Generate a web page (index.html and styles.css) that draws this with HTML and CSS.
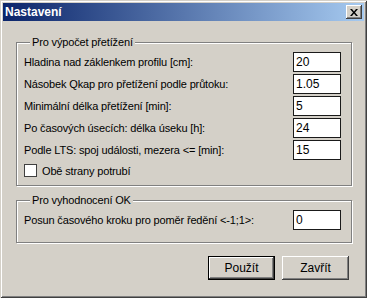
FILE: index.html
```html
<!DOCTYPE html>
<html lang="cs">
<head>
    <meta charset="UTF-8">
    <title>Nastavení</title>
    <link rel="stylesheet" href="styles.css">
</head>
<body>
    <div class="window">
        <!-- Titulek okna -->
        <div class="titlebar">
            <span class="title">Nastavení</span>
            <button class="close-btn" title="Zavřít">
                <svg width="8" height="7" viewBox="0 0 8 7">
                    <path d="M0 0h2l2 2.5L6 0h2L5 3.5 8 7H6L4 4.5 2 7H0l3-3.5z" fill="#000"/>
                </svg>
            </button>
        </div>

        <div class="content">
            <fieldset class="group">
                <legend>Pro výpočet přetížení</legend>
                <div class="row">
                    <label>Hladina nad záklenkem profilu [cm]:</label>
                    <input type="text" value="20">
                </div>
                <div class="row">
                    <label>Násobek Qkap pro přetížení podle průtoku:</label>
                    <input type="text" value="1.05">
                </div>
                <div class="row">
                    <label>Minimální délka přetížení [min]:</label>
                    <input type="text" value="5">
                </div>
                <div class="row">
                    <label>Po časových úsecích: délka úseku [h]:</label>
                    <input type="text" value="24">
                </div>
                <div class="row">
                    <label>Podle LTS: spoj události, mezera &lt;= [min]:</label>
                    <input type="text" value="15">
                </div>
                <div class="check-row">
                    <span class="checkbox"></span>
                    <span>Obě strany potrubí</span>
                </div>
            </fieldset>

            <fieldset class="group group-ok">
                <legend>Pro vyhodnocení OK</legend>
                <div class="row">
                    <label>Posun časového kroku pro poměr ředění &lt;-1;1&gt;:</label>
                    <input type="text" value="0">
                </div>
            </fieldset>

            <div class="buttons">
                <button class="btn btn-default">Použít</button>
                <button class="btn">Zavřít</button>
            </div>
        </div>
    </div>
</body>
</html>
```

FILE: styles.css
```css
/* Klasický vzhled dialogu */
body {
    margin: 0;
    background: #d4d0c8;
    font-family: "Liberation Sans", Arial, sans-serif;
    font-size: 11px;
    letter-spacing: -0.15px;
    color: #000;
}

.window {
    width: 367px;
    height: 298px;
    box-sizing: border-box;
    padding: 3px;
    background: #d4d0c8;
    box-shadow: inset 1px 1px 0 #d4d0c8, inset -1px -1px 0 #404040,
                inset 2px 2px 0 #fff, inset -2px -2px 0 #808080;
}

/* Titulek */
.titlebar {
    height: 18px;
    display: flex;
    align-items: center;
    justify-content: space-between;
    padding: 0 2px 0 2px;
    background: linear-gradient(to right, #0a246a, #a6caf0);
}

.title {
    color: #fff;
    font-weight: bold;
    font-size: 12px;
    letter-spacing: 0;
}

.close-btn {
    width: 16px;
    height: 14px;
    padding: 0;
    border: none;
    background: #d4d0c8;
    display: flex;
    align-items: center;
    justify-content: center;
    box-shadow: inset -1px -1px 0 #404040, inset 1px 1px 0 #fff,
                inset -2px -2px 0 #808080;
}

.content {
    padding: 15px 12px 0 13px;
}

/* Skupiny */
.group {
    margin: 0;
    padding: 4px 10px 8px 7px;
    border: 1px solid #808080;
    box-shadow: inset 1px 1px 0 #fff, 1px 1px 0 #fff;
}

.group legend {
    padding: 0 2px;
    margin-left: 6px;
    background: #d4d0c8;
}

.group-ok {
    margin-top: 8px;
    padding-top: 4px;
    padding-bottom: 12px;
}

.row {
    display: flex;
    justify-content: space-between;
    align-items: center;
    height: 20px;
    margin-bottom: 2px;
}

.group-ok .row {
    margin-bottom: 0;
}

.row input {
    width: 48px;
    height: 20px;
    box-sizing: border-box;
    border: 1px solid #1a1a1a;
    padding: 0 2px;
    font-family: inherit;
    font-size: 12px;
    outline: none;
}

.check-row {
    display: flex;
    align-items: center;
    gap: 5px;
    margin-top: 4px;
    height: 13px;
}

.checkbox {
    width: 11px;
    height: 11px;
    background: #fff;
    border: 1px solid #404040;
}

/* Tlačítka */
.buttons {
    display: flex;
    justify-content: flex-end;
    gap: 7px;
    margin-top: 13px;
    padding-right: 3px;
}

.btn {
    width: 67px;
    height: 24px;
    font-family: inherit;
    font-size: 12px;
    letter-spacing: 0;
    background: #d4d0c8;
    border: none;
    box-shadow: inset -1px -1px 0 #404040, inset 1px 1px 0 #fff,
                inset -2px -2px 0 #808080;
}

.btn-default {
    box-shadow: inset 0 0 0 1px #000, inset -2px -2px 0 #404040,
                inset 2px 2px 0 #fff, inset -3px -3px 0 #808080;
}
```
